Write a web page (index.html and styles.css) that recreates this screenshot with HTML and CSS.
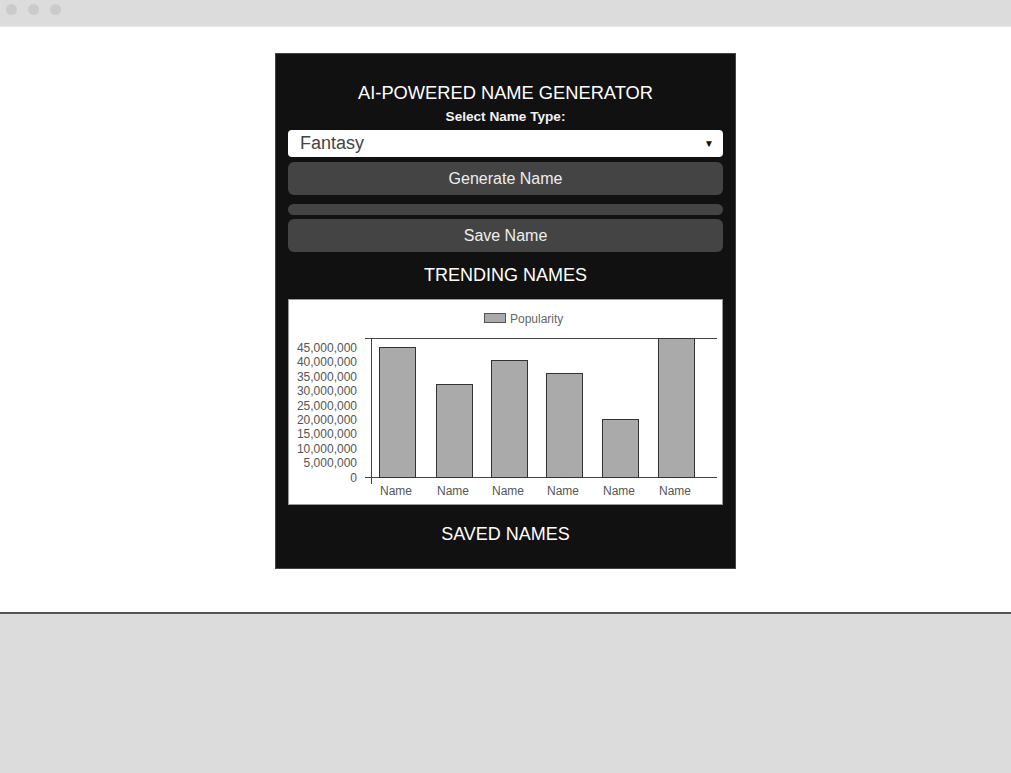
FILE: index.html
```html
<!doctype html>
<html lang="en">
<head>
	<meta charset="UTF-8">
	<title>AI-Powered Name Generator</title>
	<link rel="stylesheet" href="styles.css">
</head>
<body>
	<div class="topbar">
		<span class="dot"></span>
		<span class="dot"></span>
		<span class="dot"></span>
	</div>
	<div class="page">
		<div class="card">
			<h1 class="title">AI-POWERED NAME GENERATOR</h1>
			<label class="label">Select Name Type:</label>
			<div class="select">
				<span>Fantasy</span>
				<span class="arrow">&#9660;</span>
			</div>
			<div class="btn">Generate Name</div>
			<div class="progress"></div>
			<div class="btn">Save Name</div>
			<h2 class="section">TRENDING NAMES</h2>
			<div class="chart">
				<svg width="432" height="204" viewBox="0 0 432 204">
					<!-- legend -->
					<rect x="195.5" y="13.5" width="21" height="9" fill="#aaa" stroke="#555"/>
					<text x="221" y="23" class="legend" fill="#666">Popularity</text>
					<!-- y labels -->
					<g class="ylab" fill="#555">
						<text x="68" y="52">45,000,000</text>
						<text x="68" y="66">40,000,000</text>
						<text x="68" y="81">35,000,000</text>
						<text x="68" y="95">30,000,000</text>
						<text x="68" y="110">25,000,000</text>
						<text x="68" y="124">20,000,000</text>
						<text x="68" y="138">15,000,000</text>
						<text x="68" y="153">10,000,000</text>
						<text x="68" y="167">5,000,000</text>
						<text x="68" y="182">0</text>
					</g>
					<!-- axes -->
					<line x1="76" y1="38.5" x2="428" y2="38.5" stroke="#444"/>
					<line x1="76" y1="177.5" x2="428" y2="177.5" stroke="#444"/>
					<line x1="82.5" y1="38" x2="82.5" y2="184" stroke="#444"/>
					<!-- bars -->
					<g fill="#aaa" stroke="#333">
						<rect x="90.5" y="47.5" width="36" height="130"/>
						<rect x="147.5" y="84.5" width="36" height="93"/>
						<rect x="202.5" y="60.5" width="36" height="117"/>
						<rect x="257.5" y="73.5" width="36" height="104"/>
						<rect x="313.5" y="119.5" width="36" height="58"/>
						<rect x="369.5" y="38.5" width="36" height="139"/>
					</g>
					<g class="xlab" fill="#555">
						<text x="107" y="195">Name</text>
						<text x="164" y="195">Name</text>
						<text x="219" y="195">Name</text>
						<text x="274" y="195">Name</text>
						<text x="330" y="195">Name</text>
						<text x="386" y="195">Name</text>
					</g>
				</svg>
			</div>
			<h2 class="section saved">SAVED NAMES</h2>
		</div>
	</div>
	<div class="bottom"></div>
</body>
</html>
```

FILE: styles.css
```css
html,body{
	margin: 0;
	padding: 0;
}
body{
	font-family: "Liberation Sans", Arial, sans-serif;
	background: #dcdcdc;
}
.topbar{
	height: 26px;
	background: #dcdcdc;
	display: flex;
	align-items: center;
	gap: 11px;
	padding-left: 6px;
	border-bottom: 1px solid #e8e8e8;
}
.dot{
	width: 11px;
	height: 11px;
	border-radius: 50%;
	background: #cbcbcb;
	margin-top: -8px;
}
.page{
	background: #fff;
	height: 587px;
	padding-top: 26px;
	box-sizing: border-box;
	border-bottom: 2px solid #555;
}
.card{
	width: 461px;
	height: 516px;
	box-sizing: border-box;
	margin-left: 275px;
	background: #111;
	border: 1px solid #444;
	padding: 12px;
	color: #fff;
	display: flex;
	flex-direction: column;
}
.title{
	font-size: 18.3px;
	font-weight: normal;
	text-align: center;
	line-height: 21px;
	margin: 16px 0 0;
}
.label{
	font-size: 13.6px;
	font-weight: bold;
	text-align: center;
	line-height: 15px;
	margin-top: 6px;
	color: #f2f2f2;
}
.select{
	height: 27px;
	margin-top: 6px;
	background: #fff;
	border-radius: 4px;
	display: flex;
	align-items: center;
	justify-content: space-between;
	padding: 0 9px 0 12px;
	color: #444;
	font-size: 18px;
}
.arrow{
	font-size: 10px;
	color: #111;
}
.btn{
	height: 33px;
	margin-top: 5px;
	background: #444;
	border-radius: 6px;
	display: flex;
	align-items: center;
	justify-content: center;
	font-size: 16px;
	color: #eee;
}
.progress{
	height: 11px;
	margin-top: 9px;
	background: #444;
	border-radius: 6px;
}
.progress + .btn{
	margin-top: 4px;
}
.section{
	font-size: 18px;
	font-weight: normal;
	text-align: center;
	line-height: 21px;
	margin: 13px 0 0;
}
.chart{
	margin-top: 13px;
	background: #fff;
	border: 1px solid #999;
	height: 204px;
}
.chart svg{
	display: block;
	font-family: "Liberation Sans", Arial, sans-serif;
}
.legend{
	font-size: 12px;
}
.ylab text{
	font-size: 12px;
	text-anchor: end;
}
.xlab text{
	font-size: 12px;
	text-anchor: middle;
}
.saved{
	margin-top: 19px;
}
.bottom{
	height: 159px;
	background: #dcdcdc;
}
```
